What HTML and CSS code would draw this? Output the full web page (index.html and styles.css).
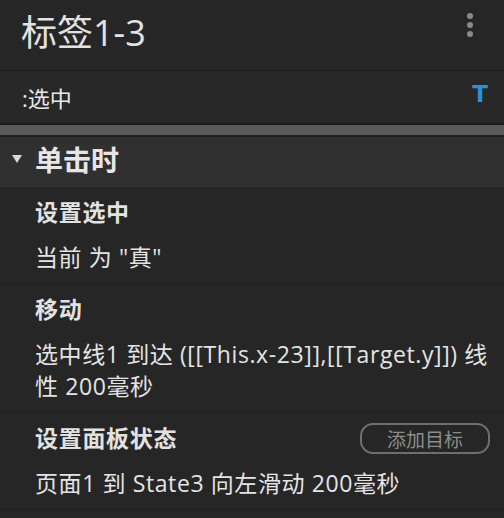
FILE: index.html
```html
<!DOCTYPE html>
<html lang="zh">
<head>
    <meta charset="UTF-8">
    <title>标签1-3</title>
    <link rel="stylesheet" href="styles.css">
</head>
<body>
    <div class="panel">
        <div class="header">
            <div class="title">标签1-3</div>
            <div class="kebab"><span></span><span></span><span></span></div>
        </div>

        <div class="style-row">
            <div class="style-name">:选中</div>
            <div class="style-icon">T</div>
        </div>

        <div class="divider"></div>

        <div class="event-head">
            <span class="caret"></span>
            <span class="event-name">单击时</span>
        </div>

        <div class="action">
            <div class="action-title">设置选中</div>
            <div class="action-desc">当前 为 "真"</div>
        </div>
        <div class="action">
            <div class="action-title">移动</div>
            <div class="action-desc">选中线1 到达 ([[This.x-23]],[[Target.y]]) 线性 200毫秒</div>
        </div>
        <div class="action">
            <div class="action-top">
                <div class="action-title">设置面板状态</div>
                <button class="add-target">添加目标</button>
            </div>
            <div class="action-desc">页面1 到 State3 向左滑动 200毫秒</div>
        </div>
    </div>
</body>
</html>
```

FILE: styles.css
```css
body {
    margin: 0;
    padding: 0;
    background-color: #262626;
    font-family: "Open Sans", "Noto Sans CJK SC", sans-serif;
    color: #e6e6e6;
}

.panel {
    width: 504px;
    height: 518px;
    overflow: hidden;
    background-color: #262626;
}

.header {
    height: 71px;
    display: flex;
    align-items: center;
    justify-content: space-between;
    padding: 0 31px 0 21px;
    border-bottom: 1px solid #1b1b1b;
    box-sizing: border-box;
}

.title {
    font-size: 36px;
    color: #e2e2e2;
    margin-top: -10px;
}

.kebab {
    display: flex;
    flex-direction: column;
    gap: 3px;
    margin-top: -20px;
}

.kebab span {
    width: 6px;
    height: 6px;
    border-radius: 50%;
    background-color: #8a8a8a;
}

.style-row {
    height: 54px;
    display: flex;
    align-items: center;
    justify-content: space-between;
    padding: 0 16px 0 22px;
    background-color: #282828;
    box-sizing: border-box;
    border-bottom: 2px solid #1c1c1c;
}

.style-name {
    font-size: 22px;
    color: #e8e8e8;
}

.style-icon {
    font-family: "DejaVu Sans", sans-serif;
    font-weight: bold;
    font-size: 23px;
    color: #2b8fe0;
    margin-top: -6px;
}

.divider {
    height: 10px;
    background-color: #5a5a5a;
    border-bottom: 2px solid #1e1e1e;
}

.event-head {
    height: 50px;
    display: flex;
    align-items: center;
    padding-left: 12px;
    background-color: #303030;
}

.caret {
    width: 0;
    height: 0;
    border-left: 5px solid transparent;
    border-right: 5px solid transparent;
    border-top: 8px solid #d8d8d8;
    margin-right: 13px;
    margin-top: -6px;
}

.event-name {
    font-size: 28px;
    font-weight: bold;
    color: #e6e6e6;
    margin-top: -6px;
}

.action {
    padding: 8px 14px 10px 35px;
    border-bottom: 1px solid #222222;
}

.action-top {
    display: flex;
    align-items: center;
    justify-content: space-between;
}

.action-title {
    font-size: 23px;
    font-weight: bold;
    color: #e2e2e2;
    line-height: 34px;
    letter-spacing: 0.7px;
    margin-bottom: 12px;
}

.action-desc {
    font-size: 23px;
    color: #e4e4e4;
    line-height: 32px;
    letter-spacing: 0.6px;
}

.add-target {
    font-family: "Open Sans", "Noto Sans CJK SC", sans-serif;
    font-size: 19px;
    color: #8c8c8c;
    background: transparent;
    border: 2px solid #6e6e6e;
    border-radius: 13px;
    width: 130px;
    height: 31px;
    padding: 0;
    margin-bottom: 12px;
}
```
